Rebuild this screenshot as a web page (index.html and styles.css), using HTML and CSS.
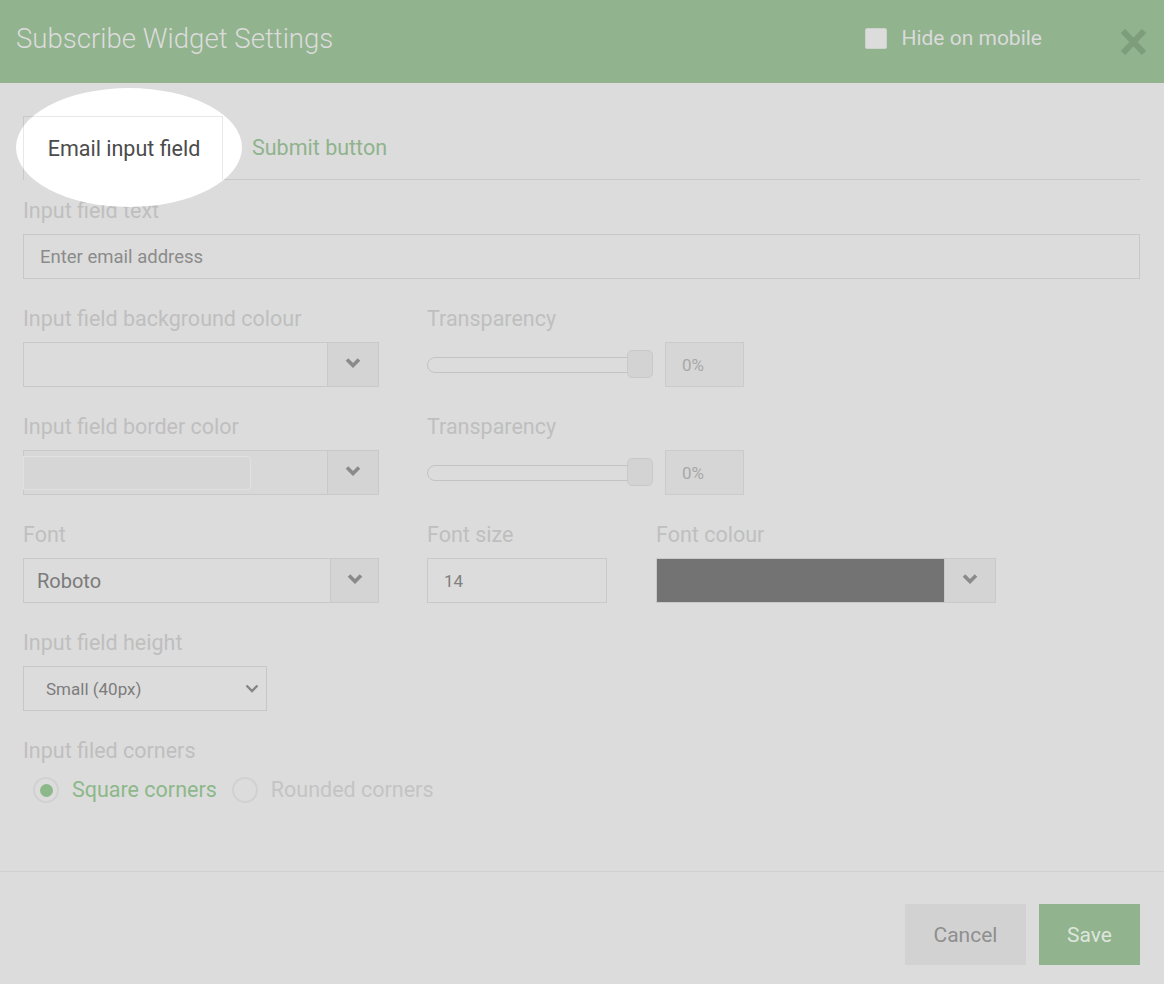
FILE: index.html
```html
<!DOCTYPE html>
<html lang="en">
<head>
<meta charset="utf-8">
<title>Subscribe Widget Settings</title>
<link rel="stylesheet" href="styles.css">
</head>
<body>
<header class="modal-header">
  <h1 class="modal-title">Subscribe Widget Settings</h1>
  <div class="header-actions">
    <label class="hide-mobile"><span class="checkbox"></span><span>Hide on mobile</span></label>
    <button class="close-btn" aria-label="Close">
      <svg width="27" height="26" viewBox="0 0 27 26"><path d="M3 2 L24 24 M24 2 L3 24" stroke="#7e9d7b" stroke-width="6" fill="none"/></svg>
    </button>
  </div>
</header>

<main class="modal-body">
  <div class="tabs">
    <div class="spotlight"></div>
    <div class="tab active">Email input field</div>
    <div class="tab-rest"><span class="tab-link">Submit button</span></div>
  </div>

  <div class="form">
    <div class="field">
      <div class="label">Input field text</div>
      <div class="text-input">Enter email address</div>
    </div>

    <div class="row">
      <div class="field col-main">
        <div class="label">Input field background colour</div>
        <div class="select">
          <div class="select-main"></div>
          <div class="select-btn"><svg class="chev" width="16" height="10" viewBox="0 0 16 10"><path d="M2 1.5 L8 7.5 L14 1.5" stroke="#8a8a8a" stroke-width="3.6" fill="none"/></svg></div>
        </div>
      </div>
      <div class="field">
        <div class="label">Transparency</div>
        <div class="slider-row">
          <div class="slider"><div class="track"></div><div class="thumb"></div></div>
          <div class="value-box">0%</div>
        </div>
      </div>
    </div>

    <div class="row">
      <div class="field col-main">
        <div class="label">Input field border color</div>
        <div class="select select-dim">
          <div class="select-main"><div class="inner-swatch"></div></div>
          <div class="select-btn"><svg class="chev" width="16" height="10" viewBox="0 0 16 10"><path d="M2 1.5 L8 7.5 L14 1.5" stroke="#8a8a8a" stroke-width="3.6" fill="none"/></svg></div>
        </div>
      </div>
      <div class="field">
        <div class="label">Transparency</div>
        <div class="slider-row">
          <div class="slider"><div class="track"></div><div class="thumb"></div></div>
          <div class="value-box">0%</div>
        </div>
      </div>
    </div>

    <div class="row">
      <div class="field col-main">
        <div class="label">Font</div>
        <div class="select">
          <div class="select-main font-value">Roboto</div>
          <div class="select-btn narrow"><svg class="chev" width="16" height="10" viewBox="0 0 16 10"><path d="M2 1.5 L8 7.5 L14 1.5" stroke="#8a8a8a" stroke-width="3.6" fill="none"/></svg></div>
        </div>
      </div>
      <div class="field col-size">
        <div class="label">Font size</div>
        <div class="num-input">14</div>
      </div>
      <div class="field col-colour">
        <div class="label">Font colour</div>
        <div class="select">
          <div class="select-main swatch-dark"></div>
          <div class="select-btn"><svg class="chev" width="16" height="10" viewBox="0 0 16 10"><path d="M2 1.5 L8 7.5 L14 1.5" stroke="#8a8a8a" stroke-width="3.6" fill="none"/></svg></div>
        </div>
      </div>
    </div>

    <div class="field">
      <div class="label">Input field height</div>
      <div class="native-select">
        <span>Small (40px)</span>
        <svg width="14" height="9" viewBox="0 0 14 9"><path d="M1.5 1.5 L7 7 L12.5 1.5" stroke="#858585" stroke-width="2.4" fill="none"/></svg>
      </div>
    </div>

    <div class="field">
      <div class="label">Input filed corners</div>
      <div class="radios">
        <label class="radio checked"><span class="circle"></span><span>Square corners</span></label>
        <label class="radio"><span class="circle"></span><span>Rounded corners</span></label>
      </div>
    </div>
  </div>
</main>

<footer class="modal-footer">
  <button class="btn btn-cancel">Cancel</button>
  <button class="btn btn-save">Save</button>
</footer>
</body>
</html>
```

FILE: styles.css
```css
* { box-sizing: border-box; }

html, body { height: 100%; }

body {
  margin: 0;
  display: flex;
  flex-direction: column;
  background: #dcdcdc;
  font-family: Roboto, "Liberation Sans", Arial, sans-serif;
}

/* Header */
.modal-header {
  height: 83px;
  flex: none;
  background: #91b38e;
  display: flex;
  align-items: center;
  justify-content: space-between;
  padding: 0 17px 7px 16px;
}
.modal-title {
  margin: 0;
  font-size: 27.6px;
  font-weight: 300;
  color: #dcdcdc;
}
.header-actions {
  display: flex;
  align-items: center;
}
.hide-mobile {
  display: flex;
  align-items: center;
  gap: 14px;
  font-size: 21px;
  color: #dadada;
}
.checkbox {
  width: 22px;
  height: 21px;
  background: #dcdcdc;
  border: 1px solid #cdd3cc;
  border-radius: 2px;
}
.close-btn {
  margin-left: 78px;
  margin-top: 8px;
  width: 27px;
  height: 26px;
  padding: 0;
  border: 0;
  background: none;
  display: flex;
}

/* Body */
.modal-body {
  flex: 1;
  padding: 0 24px 0 23px;
}

.tabs {
  position: relative;
  display: flex;
  height: 64px;
  margin-top: 33px;
}
.spotlight {
  position: absolute;
  left: -7px;
  top: -28px;
  width: 226px;
  height: 119px;
  border-radius: 50%;
  background: #ffffff;
}
.tab {
  position: relative;
  z-index: 1;
  width: 200px;
  display: flex;
  align-items: center;
  justify-content: center;
  padding: 0 0 1px 2px;
  border: 1px solid rgba(0, 0, 0, 0.09);
  border-bottom: 0;
  font-size: 21.5px;
  color: #4b4b4b;
}
.tab-rest {
  flex: 1;
  display: flex;
  align-items: center;
  padding-left: 29px;
  border-bottom: 1px solid #c9c9c9;
  font-size: 21.5px;
  color: #8fb38c;
}

.form {
  margin-top: 20px;
  display: flex;
  flex-direction: column;
  gap: 29px;
}
.label {
  font-size: 21.5px;
  line-height: 22px;
  color: #bfbfbf;
  margin-bottom: 12px;
}
.row {
  display: flex;
  gap: 48px;
}
.col-main { width: 356px; }
.col-size { width: 180px; }
.col-colour { width: 340px; margin-left: 1px; }

.text-input {
  height: 45px;
  border: 1px solid #c8c8c8;
  padding-left: 16px;
  display: flex;
  align-items: center;
  font-size: 18.5px;
  color: #8b8b8b;
}

.select {
  height: 45px;
  display: flex;
  border: 1px solid #c9c9c9;
}
.select-main {
  flex: 1;
  display: flex;
  align-items: center;
}
.select-btn {
  width: 51px;
  border-left: 1px solid #c9c9c9;
  background: #d4d4d4;
  display: flex;
  align-items: center;
  justify-content: center;
  padding-bottom: 3px;
}
.select-btn.narrow { width: 48px; }

.select-dim .select-main {
  background: #d8d8d8;
  align-items: flex-start;
}
.inner-swatch {
  width: 228px;
  height: 34px;
  margin-top: 5px;
  margin-left: -1px;
  background: #d6d6d6;
  border: 1px solid #e1e1e1;
  border-radius: 0 4px 4px 0;
}

.font-value {
  padding-left: 13px;
  font-size: 20px;
  color: #7b7b7b;
}
.swatch-dark { background: #737373; }

.num-input {
  height: 45px;
  border: 1px solid #c9c9c9;
  padding-left: 16px;
  display: flex;
  align-items: center;
  font-size: 17px;
  color: #808080;
}

.slider-row {
  display: flex;
  align-items: center;
  gap: 12px;
}
.slider {
  position: relative;
  width: 226px;
  height: 45px;
  display: flex;
  align-items: center;
}
.track {
  width: 225px;
  height: 16px;
  border: 1px solid #c3c3c3;
  border-radius: 8px;
  background: #dcdcdc;
}
.thumb {
  position: absolute;
  right: 0;
  top: 8px;
  width: 26px;
  height: 28px;
  border: 1px solid #c9c9c9;
  border-radius: 5px;
  background: #d3d3d3;
}
.value-box {
  width: 79px;
  height: 45px;
  background: #d6d6d6;
  border: 1px solid #cbcbcb;
  padding-left: 16px;
  display: flex;
  align-items: center;
  font-size: 17px;
  color: #a8a8a8;
}

.native-select {
  width: 244px;
  height: 45px;
  border: 1px solid #c7c7c7;
  padding: 0 7px 0 22px;
  display: flex;
  align-items: center;
  justify-content: space-between;
  font-size: 17px;
  color: #7c7c7c;
}

.radios {
  display: flex;
  align-items: center;
  gap: 15px;
  padding-left: 10px;
  margin-top: 15px;
}
.radio {
  display: flex;
  align-items: center;
  gap: 13px;
  font-size: 21.5px;
  line-height: 26px;
  color: #c4c4c4;
}
.circle {
  width: 26px;
  height: 26px;
  border: 2px solid #d1d1d1;
  border-radius: 50%;
  display: flex;
  align-items: center;
  justify-content: center;
}
.radio.checked { color: #8cb88a; }
.radio.checked .circle::after {
  content: "";
  width: 13px;
  height: 13px;
  border-radius: 50%;
  background: #8cb88a;
}

/* Footer */
.modal-footer {
  flex: none;
  border-top: 1px solid #d0d0d0;
  padding: 32px 24px 19px;
  display: flex;
  justify-content: flex-end;
  gap: 13px;
}
.btn {
  height: 61px;
  border: 0;
  font-family: inherit;
  font-size: 21px;
}
.btn-cancel {
  width: 121px;
  background: #d2d2d2;
  color: #8f8f8f;
}
.btn-save {
  width: 101px;
  background: #91b38e;
  color: #dde6dc;
}
```
